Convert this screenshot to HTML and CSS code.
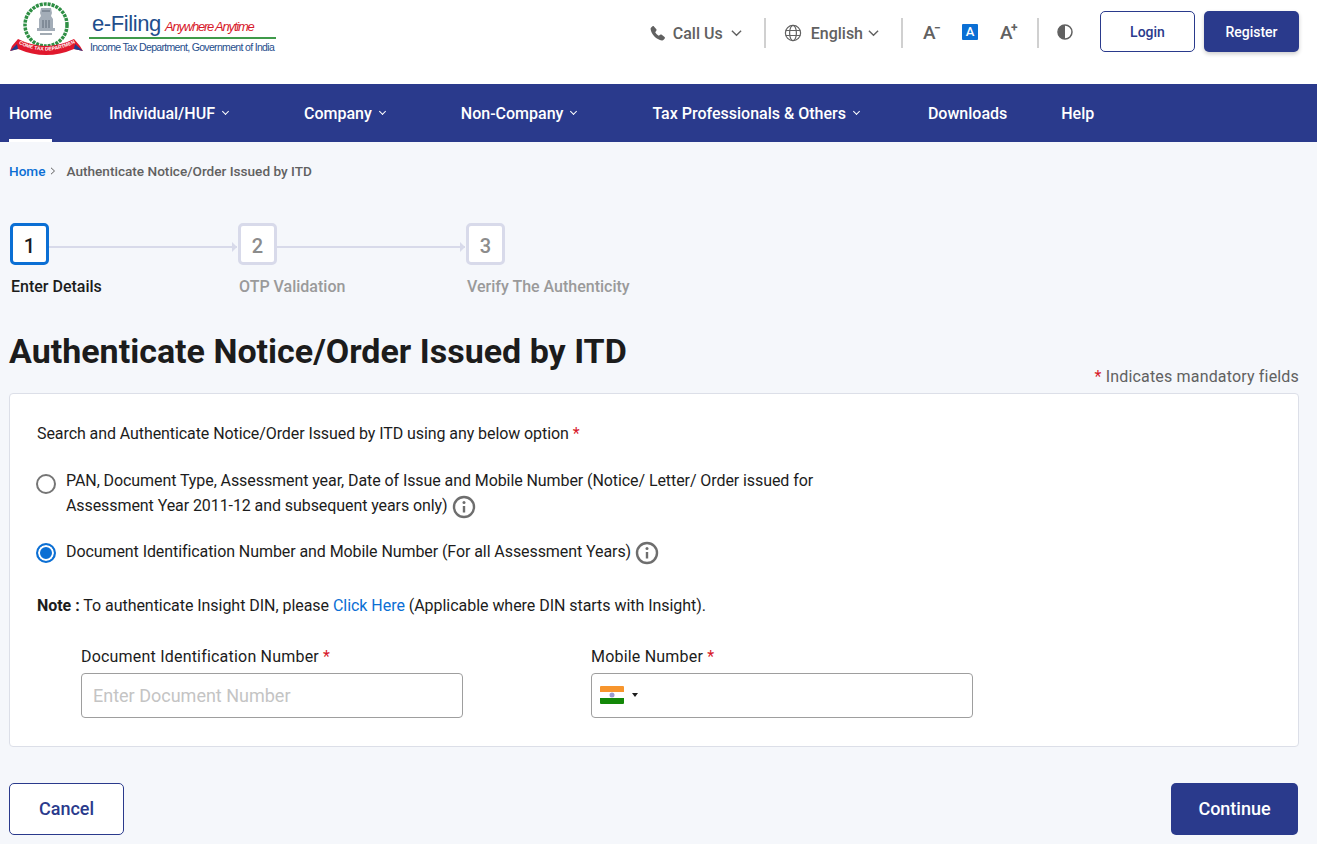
FILE: index.html
```html
<!DOCTYPE html>
<html lang="en">
<head>
    <meta charset="UTF-8">
    <meta name="viewport" content="width=device-width, initial-scale=1.0">
    <title>Authenticate Notice/Order Issued by ITD</title>
    <link rel="stylesheet" href="styles.css">
</head>
<body>
    <div class="top-bar">
        <div class="logo">
            <svg class="emblem" width="76" height="54" viewBox="0 0 76 54">
                <circle cx="37" cy="20" r="21" fill="none" stroke="#2f8f45" stroke-width="3.500" stroke-dasharray="3 1"/>
                <circle cx="37" cy="20" r="18" fill="#fff"/>
                <path d="M32 3h10l1 5-1 3 2 3v9h2v3H28v-3h2v-9l2-3-1-3z" fill="#a3adb8"/>
                <path d="M33 6h8M34 15v8M37 15v8M40 15v8" stroke="#5e6b78" stroke-width="1" fill="none"/>
                <path d="M31 29h12" stroke="#7a8793" stroke-width="1.400"/>
                <path d="M9 34Q37 48 65 34L71 41 74 46 65 44Q37 56 9 44L1 46 3 41z" fill="#e0182d"/>
                <path d="M1 46l8-2-1-5zM74 46l-9-2 1-5z" fill="#1f3f8f"/>
                <path id="banner-curve" d="M8 38Q37 53 66 38" fill="none"/>
                <text class="banner-text"><textPath href="#banner-curve" startOffset="50%" text-anchor="middle">INCOME TAX DEPARTMENT</textPath></text>
            </svg>
            <div class="logo-text">
                <div class="logo-top">
                    <span class="logo-name">e-Filing</span>
                    <span class="logo-tag">Anywhere Anytime</span>
                </div>
                <div class="logo-sub">Income Tax Department, Government of India</div>
            </div>
        </div>
        <div class="top-tools">
            <a class="tool-link tool-call">
                <svg width="18" height="18" viewBox="0 0 24 24"><path d="M6.600 3.200 9.800 7c.4.500.4 1.100.1 1.600L8.300 11c1 2 2.700 3.700 4.700 4.700l2.400-1.600c.5-.3 1.100-.3 1.600.1l3.800 3.200c.6.500.7 1.300.2 1.900l-1.500 1.800c-.6.600-1.400.9-2.200.8C9.900 21 3 14.100 2.100 6.700c-.1-.8.200-1.600.8-2.200l1.800-1.500c.6-.5 1.400-.4 1.900.2z" fill="#616161"/></svg>
                <span>Call Us</span>
                <svg class="tool-chevron" width="11" height="8" viewBox="0 0 12 8"><path d="M1 1.500l5 5 5-5" fill="none" stroke="#616161" stroke-width="1.500"/></svg>
            </a>
            <span class="tool-sep tool-sep-first"></span>
            <a class="tool-link tool-lang">
                <svg width="18" height="18" viewBox="0 0 18 18" fill="none" stroke="#616161" stroke-width="1.200"><circle cx="9" cy="9" r="7.600"/><ellipse cx="9" cy="9" rx="3.400" ry="7.600"/><path d="M1.800 6.500h14.400M1.800 11.500h14.400"/></svg>
                <span>English</span>
                <svg class="tool-chevron" width="11" height="8" viewBox="0 0 12 8"><path d="M1 1.500l5 5 5-5" fill="none" stroke="#616161" stroke-width="1.500"/></svg>
            </a>
            <span class="tool-sep"></span>
            <div class="font-tools">
                <span class="font-btn">A<i class="font-mark">&minus;</i></span>
                <span class="font-btn font-current">A</span>
                <span class="font-btn font-larger">A<i class="font-mark">+</i></span>
            </div>
            <span class="tool-sep tool-sep-last"></span>
            <svg class="contrast" width="16" height="16" viewBox="0 0 16 16"><circle cx="8" cy="8" r="7" fill="#fff" stroke="#616161" stroke-width="1.500"/><path d="M8 1a7 7 0 0 0 0 14z" fill="#616161"/></svg>
            <button class="btn-login">Login</button>
            <button class="btn-register">Register</button>
        </div>
    </div>

    <nav class="nav-bar">
        <a class="nav-item active">Home</a>
        <a class="nav-item has-menu">Individual/HUF</a>
        <a class="nav-item has-menu">Company</a>
        <a class="nav-item has-menu">Non-Company</a>
        <a class="nav-item has-menu nav-last-menu">Tax Professionals &amp; Others</a>
        <a class="nav-item">Downloads</a>
        <a class="nav-item">Help</a>
    </nav>

    <main class="page">
        <div class="breadcrumb">
            <a class="crumb-link">Home</a>
            <svg width="6" height="8" viewBox="0 0 6 8"><path d="M1 .8 4.500 4 1 7.200" fill="none" stroke="#616161" stroke-width="1"/></svg>
            <span class="crumb-current">Authenticate Notice/Order Issued by ITD</span>
        </div>

        <div class="stepper">
            <div class="step current">
                <div class="step-head"><span class="step-box">1</span><span class="step-line"></span></div>
                <div class="step-label">Enter Details</div>
            </div>
            <div class="step">
                <div class="step-head"><span class="step-box">2</span><span class="step-line"></span></div>
                <div class="step-label">OTP Validation</div>
            </div>
            <div class="step">
                <div class="step-head"><span class="step-box">3</span></div>
                <div class="step-label">Verify The Authenticity</div>
            </div>
        </div>

        <h1 class="page-title">Authenticate Notice/Order Issued by ITD</h1>
        <div class="mandatory"><span class="req">*</span> Indicates mandatory fields</div>

        <section class="card">
            <p class="card-intro">Search and Authenticate Notice/Order Issued by ITD using any below option <span class="req">*</span></p>

            <div class="option">
                <span class="radio"></span>
                <div class="option-text">PAN, Document Type, Assessment year, Date of Issue and Mobile Number (Notice/ Letter/ Order issued for<br>Assessment Year 2011-12 and subsequent years only)
                    <svg class="info" width="24" height="24" viewBox="0 0 24 24"><circle cx="12" cy="12" r="10" fill="none" stroke="#6e6e6e" stroke-width="2.400"/><circle cx="12" cy="7.500" r="1.500" fill="#6e6e6e"/><path d="M12 11v6.500" stroke="#6e6e6e" stroke-width="2.400"/></svg>
                </div>
            </div>
            <div class="option option-second">
                <span class="radio checked"></span>
                <div class="option-text">Document Identification Number and Mobile Number (For all Assessment Years)
                    <svg class="info" width="24" height="24" viewBox="0 0 24 24"><circle cx="12" cy="12" r="10" fill="none" stroke="#6e6e6e" stroke-width="2.400"/><circle cx="12" cy="7.500" r="1.500" fill="#6e6e6e"/><path d="M12 11v6.500" stroke="#6e6e6e" stroke-width="2.400"/></svg>
                </div>
            </div>

            <p class="note"><b>Note :</b> To authenticate Insight DIN, please <a class="note-link">Click Here</a> (Applicable where DIN starts with Insight).</p>

            <div class="fields">
                <div class="field">
                    <label class="field-label">Document Identification Number <span class="req">*</span></label>
                    <input class="field-input" type="text" placeholder="Enter Document Number">
                </div>
                <div class="field">
                    <label class="field-label">Mobile Number <span class="req">*</span></label>
                    <div class="field-input phone-input">
                        <span class="flag"><svg width="6" height="6" viewBox="0 0 6 6"><circle cx="3" cy="3" r="2.500" fill="#9a9ad0"/></svg></span>
                        <span class="flag-caret"></span>
                    </div>
                </div>
            </div>
        </section>

        <div class="actions">
            <button class="btn-cancel">Cancel</button>
            <button class="btn-continue">Continue</button>
        </div>
    </main>
</body>
</html>
```

FILE: styles.css
```css
html, body {
    height: 100%;
    margin: 0;
    padding: 0;
    overflow: hidden;
    background-color: #f5f7fb;
    font-family: Roboto, sans-serif;
    color: #1c1c1c;
}
a { cursor: pointer; }
p { margin: 0; }

/* Top bar */
.top-bar {
    display: flex;
    justify-content: space-between;
    height: 84px;
    box-sizing: border-box;
    padding: 0 18px 0 9px;
    background-color: #ffffff;
}
.logo {
    display: flex;
    align-items: flex-start;
    padding-top: 5px;
}
.emblem {
    flex-shrink: 0;
    overflow: visible;
}
.banner-text {
    font-family: "Liberation Sans", sans-serif;
    font-size: 5px;
    font-weight: bold;
    fill: #ffffff;
}
.logo-text {
    margin-left: 4px;
    width: 187px;
    padding-top: 6px;
}
.logo-top {
    display: flex;
    align-items: baseline;
    height: 26px;
    padding-left: 3px;
    border-bottom: 2px solid #3f9a4a;
}
.logo-name {
    font-family: "Liberation Sans", sans-serif;
    font-size: 22px;
    letter-spacing: -0.4px;
    color: #1f4e8c;
}
.logo-tag {
    margin-left: 4px;
    font-family: "Liberation Sans", sans-serif;
    font-size: 13px;
    font-style: italic;
    letter-spacing: -1.2px;
    color: #d7192a;
}
.logo-sub {
    margin-top: 2px;
    padding-left: 1px;
    font-family: "Liberation Sans", sans-serif;
    font-size: 10.500px;
    letter-spacing: -0.67px;
    white-space: nowrap;
    color: #1f4e8c;
}
.top-tools {
    display: flex;
    align-items: center;
    height: 64px;
}
.tool-link {
    display: flex;
    align-items: center;
    padding-top: 2px;
    font-size: 16px;
    font-weight: 500;
    color: #616161;
}
.tool-call span { margin-left: 6px; }
.tool-call .tool-chevron { margin-left: 8px; }
.tool-lang span { margin-left: 9px; }
.tool-lang .tool-chevron { margin-left: 5px; }
.tool-sep {
    width: 2px;
    height: 30px;
    margin: 2px 20px 0 22px;
    background-color: #d0d0d0;
}
.tool-sep-first { margin-right: 18px; }
.tool-sep-last { margin: 2px 18px 0 18px; }
.font-tools {
    display: flex;
    align-items: center;
    gap: 19px;
}
.font-btn {
    display: block;
    position: relative;
    width: 19px;
    font-size: 19px;
    font-weight: 500;
    line-height: 19px;
    color: #616161;
}
.font-larger { margin-left: 2px; }
.font-mark {
    position: absolute;
    top: -4px;
    left: 11px;
    font-size: 12px;
    font-style: normal;
    font-weight: 700;
}
.font-current {
    width: 16px;
    height: 16px;
    margin: 0 1px;
    font-size: 13px;
    font-weight: 500;
    line-height: 16px;
    text-align: center;
    border-radius: 1px;
    background-color: #0b6fd4;
    color: #ffffff;
}
.contrast { margin-right: 27px; }
.btn-login, .btn-register {
    height: 41px;
    margin-top: -2px;
    padding-top: 2px;
    box-sizing: border-box;
    border-radius: 5px;
    font-family: Roboto, sans-serif;
    font-size: 14px;
    font-weight: 500;
    cursor: pointer;
}
.btn-login {
    width: 95px;
    border: 1px solid #2a3a8c;
    background-color: #ffffff;
    color: #2a3a8c;
}
.btn-register {
    width: 95px;
    margin-left: 9px;
    border: none;
    background-color: #2a3a8c;
    color: #ffffff;
    box-shadow: 0 2px 4px rgba(0, 0, 0, 0.2);
}

/* Main navigation */
.nav-bar {
    display: flex;
    height: 58px;
    padding-left: 9px;
    gap: 54px;
    background-color: #2a3a8c;
}
.nav-item {
    display: flex;
    align-items: center;
    box-sizing: border-box;
    height: 58px;
    border-bottom: 3px solid transparent;
    padding-top: 3px;
    font-size: 16px;
    font-weight: 500;
    color: #ffffff;
}
.nav-item.active {
    margin-right: 3px;
    border-bottom-color: #ffffff;
}
.has-menu { padding-right: 22px; }
.nav-last-menu { padding-right: 15px; }
.has-menu::after {
    content: "";
    display: block;
    width: 4px;
    height: 4px;
    margin: -4px 0 0 8px;
    border-right: 1.500px solid #ffffff;
    border-bottom: 1.500px solid #ffffff;
    transform: rotate(45deg);
}

/* Page body */
.page {
    padding: 0 18px 0 9px;
}
.breadcrumb {
    display: flex;
    align-items: center;
    height: 16px;
    margin-top: 21px;
    font-size: 13.600px;
    font-weight: 500;
}
.breadcrumb svg { margin-left: 5px; }
.crumb-link { color: #0b6fd4; }
.crumb-current { margin-left: 10px; color: #616161; }

.stepper {
    display: flex;
    margin-top: 44px;
    padding-left: 1px;
}
.step { width: 228px; }
.step-head {
    display: flex;
    align-items: center;
}
.step-box {
    display: flex;
    align-items: center;
    justify-content: center;
    box-sizing: border-box;
    width: 39px;
    height: 42px;
    padding-top: 3px;
    border: 3px solid #d8daea;
    border-radius: 5px;
    background-color: #ffffff;
    font-size: 20px;
    font-weight: 500;
    color: #8c8c8c;
}
.step-line {
    position: relative;
    flex: 1;
    height: 2px;
    margin: 6px 1px 0 0;
    background-color: #d8daea;
}
.step-line::after {
    content: "";
    position: absolute;
    right: 0;
    top: -4px;
    border-left: 5px solid #d8daea;
    border-top: 5px solid transparent;
    border-bottom: 5px solid transparent;
}
.step.current .step-box {
    border-color: #0b6fd4;
    color: #1c1c1c;
}
.step-label {
    margin-top: 12px;
    padding-left: 1px;
    font-size: 16px;
    font-weight: 500;
    line-height: 19px;
    color: #9a9a9a;
}
.step.current .step-label { color: #1c1c1c; }

.page-title {
    margin: 35px 0 0;
    font-size: 34px;
    font-weight: 700;
    line-height: 40px;
}
.mandatory {
    margin-top: -4px;
    font-size: 16px;
    letter-spacing: 0.17px;
    line-height: 19px;
    text-align: right;
    color: #616161;
}
.req { color: #d7192a; }

.card {
    box-sizing: border-box;
    height: 354px;
    margin-top: 7px;
    padding: 30px 27px 0;
    background-color: #ffffff;
    border: 1px solid #dcdfe8;
    border-radius: 4px;
    font-size: 16px;
    letter-spacing: -0.08px;
    line-height: 25px;
}
.card-intro { line-height: 19px; }
.option {
    display: flex;
    align-items: flex-start;
    margin-top: 25px;
}
.option-second { margin-top: 20px; }
.radio {
    flex-shrink: 0;
    box-sizing: border-box;
    width: 20px;
    height: 20px;
    margin: 6px 10px 0 -1px;
    border: 2px solid #757575;
    border-radius: 50%;
    background-color: #ffffff;
}
.radio.checked {
    margin-top: 4px;
    border-color: #0b6fd4;
    background-color: #0b6fd4;
    box-shadow: inset 0 0 0 2px #ffffff;
}
.option-text { max-width: 780px; }
.info { vertical-align: middle; }
.note {
    margin-top: 28px;
    letter-spacing: -0.04px;
}
.note b { font-weight: 700; }
.note-link { color: #0b6fd4; }
.fields {
    display: flex;
    gap: 128px;
    margin-top: 29px;
    padding-left: 44px;
    letter-spacing: 0.2px;
}
.field { width: 382px; }
.field-label {
    display: block;
    line-height: 19px;
}
.field-input {
    display: block;
    box-sizing: border-box;
    width: 382px;
    height: 45px;
    margin-top: 7px;
    padding: 0 11px;
    background-color: #ffffff;
    border: 1px solid #9e9e9e;
    border-radius: 4px;
    font-family: Roboto, sans-serif;
    font-size: 18px;
}
.field-input::placeholder { color: #c4c4c4; opacity: 1; }
.phone-input {
    display: flex;
    align-items: center;
    padding-left: 8px;
}
.flag {
    display: flex;
    align-items: center;
    justify-content: center;
    width: 24px;
    height: 18px;
    border-radius: 1px;
    background: linear-gradient(#f7952d 0 33%, #ffffff 33% 67%, #138808 67%);
}
.flag-caret {
    width: 0;
    height: 0;
    margin-left: 8px;
    border-left: 3px solid transparent;
    border-right: 3px solid transparent;
    border-top: 4px solid #1c1c1c;
}

.actions {
    display: flex;
    justify-content: space-between;
    margin-top: 36px;
    padding-right: 1px;
}
.btn-cancel, .btn-continue {
    height: 52px;
    padding-bottom: 2px;
    box-sizing: border-box;
    border-radius: 5px;
    font-family: Roboto, sans-serif;
    font-size: 18px;
    font-weight: 500;
    cursor: pointer;
}
.btn-cancel {
    width: 115px;
    border: 1px solid #2a3a8c;
    background-color: #ffffff;
    color: #2a3a8c;
}
.btn-continue {
    width: 127px;
    border: none;
    background-color: #2a3a8c;
    color: #ffffff;
}
```
